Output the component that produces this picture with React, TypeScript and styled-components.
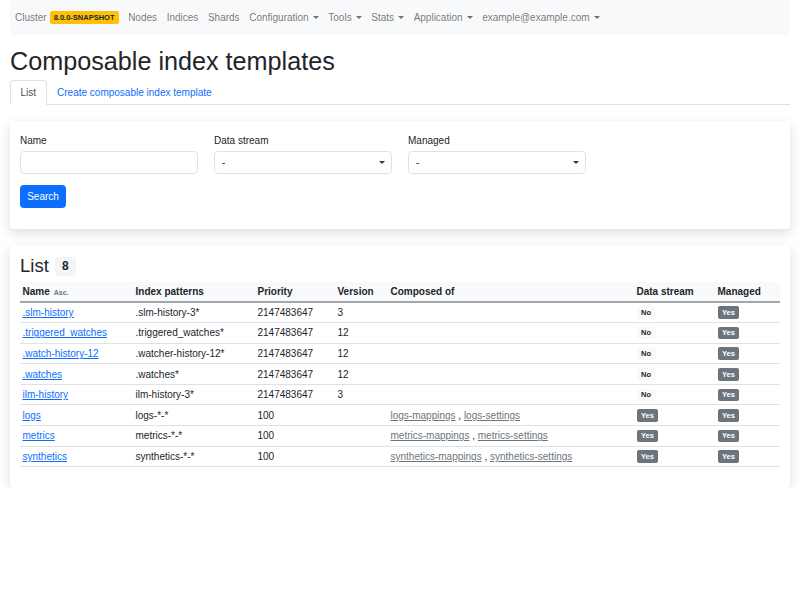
import React from "react";
import styled, { createGlobalStyle } from "styled-components";

const Global = createGlobalStyle`
  html, body { margin: 0; padding: 0; background: #fff; }
  body {
    font-family: "Liberation Sans", Arial, sans-serif;
    font-size: 10px;
    line-height: 1.5;
    color: #212529;
  }
  * { box-sizing: border-box; }
`;

const Page = styled.div`
  padding: 0 10px;
`;

const Navbar = styled.nav`
  display: flex;
  align-items: center;
  background: #f8f9fa;
  padding: 5px 0;
  height: 35px;
`;

const NavLink = styled.a`
  display: inline-flex;
  align-items: center;
  padding: 5px 4.6px 5px 5px;
  color: rgba(0, 0, 0, 0.55);
  text-decoration: none;
  white-space: nowrap;
  font-size: 10px;
`;

const Caret = styled.span`
  display: inline-block;
  margin-left: 4px;
  width: 0;
  height: 0;
  border-top: 3px solid rgba(0, 0, 0, 0.55);
  border-left: 3px solid transparent;
  border-right: 3px solid transparent;
`;

const Badge = styled.span<{ $variant: "warning" | "light" | "secondary" }>`
  display: inline-block;
  font-size: 7.5px;
  font-weight: 700;
  line-height: 1;
  padding: 2.6px 4.5px;
  border-radius: 2px;
  white-space: nowrap;
  vertical-align: 1px;
  background: ${(p) =>
    p.$variant === "warning" ? "#ffc107" : p.$variant === "light" ? "#f8f9fa" : "#6c757d"};
  color: ${(p) => (p.$variant === "secondary" ? "#fff" : "#212529")};
`;

const ClusterBadge = styled(Badge)`
  margin-left: 3px;
  padding: 2.6px 4px;
  vertical-align: 0;
`;

const Title = styled.h1`
  font-size: 25.2px;
  font-weight: 500;
  line-height: 30px;
  margin: 11px 0 4px;
`;

const Tabs = styled.div`
  display: flex;
  border-bottom: 1px solid #dee2e6;
`;

const Tab = styled.a<{ $active?: boolean }>`
  display: block;
  padding: 4px 9.5px;
  margin-bottom: -1px;
  border: 1px solid ${(p) => (p.$active ? "#dee2e6" : "transparent")};
  border-bottom-color: ${(p) => (p.$active ? "#fff" : "transparent")};
  border-radius: 4px 4px 0 0;
  background: ${(p) => (p.$active ? "#fff" : "transparent")};
  color: ${(p) => (p.$active ? "#495057" : "#0d6efd")};
  text-decoration: none;
  line-height: 15px;
`;

const Card = styled.section`
  margin-top: 16px;
  background: #fff;
  border-radius: 4px;
  box-shadow: 0 4px 12px rgba(0, 0, 0, 0.14);
  padding: 10px;
`;

const FilterRow = styled.div`
  display: grid;
  grid-template-columns: 178px 178px 178px;
  column-gap: 16px;
`;

const Field = styled.div`
  display: flex;
  flex-direction: column;
`;

const Label = styled.label`
  line-height: 15px;
  padding-top: 2px;
  margin-bottom: 3px;
`;

const Input = styled.div`
  height: 23px;
  border: 1px solid #dee2e6;
  border-radius: 4px;
  background: #fff;
`;

const Select = styled.div`
  height: 23px;
  border: 1px solid #dee2e6;
  border-radius: 4px;
  background: #fff;
  display: flex;
  align-items: center;
  justify-content: space-between;
  padding: 0 6px 0 7px;
`;

const SelectArrow = styled.span`
  width: 0;
  height: 0;
  border-top: 3.5px solid #343a40;
  border-left: 3px solid transparent;
  border-right: 3px solid transparent;
`;

const Button = styled.button`
  display: block;
  margin-top: 11px;
  margin-bottom: 11px;
  width: 46px;
  height: 23px;
  border: none;
  border-radius: 4px;
  background: #0d6efd;
  color: #fff;
  font-family: inherit;
  font-size: 10px;
  padding: 0;
`;

const ListHeading = styled.h3`
  display: flex;
  align-items: center;
  margin: 0 0 5px;
  font-size: 18.5px;
  font-weight: 500;
  line-height: 22px;
  height: 22px;
`;

const CountBadge = styled.span`
  margin-left: 6px;
  display: inline-flex;
  align-items: center;
  justify-content: center;
  width: 21px;
  height: 19px;
  background: #f4f5f6;
  border-radius: 3px;
  font-size: 12px;
  font-weight: 700;
`;

const Table = styled.table`
  width: 760px;
  table-layout: fixed;
  border-collapse: collapse;
  margin-bottom: 10px;
`;

const Th = styled.th`
  text-align: left;
  font-weight: 700;
  padding: 0 2.5px;
  height: 20px;
  line-height: 15px;
  background: #f8f9fa;
  border-bottom: 2px solid #a3a7ab;
`;

const Asc = styled.span`
  font-size: 7px;
  font-weight: 700;
  color: #6c757d;
  margin-left: 4px;
`;

const Td = styled.td`
  padding: 0 2.5px;
  height: 20.6px;
  line-height: 15px;
  border-bottom: 1px solid #dee2e6;
  white-space: nowrap;
  vertical-align: middle;
`;

const NameLink = styled.a`
  color: #0d6efd;
  text-decoration: underline;
`;

const CompLink = styled.a`
  color: #6c757d;
  text-decoration: underline;
`;

type Row = {
  name: string;
  pattern: string;
  priority: string;
  version: string;
  composed: string[];
  ds: boolean;
};

const rows: Row[] = [
  { name: ".slm-history", pattern: ".slm-history-3*", priority: "2147483647", version: "3", composed: [], ds: false },
  { name: ".triggered_watches", pattern: ".triggered_watches*", priority: "2147483647", version: "12", composed: [], ds: false },
  { name: ".watch-history-12", pattern: ".watcher-history-12*", priority: "2147483647", version: "12", composed: [], ds: false },
  { name: ".watches", pattern: ".watches*", priority: "2147483647", version: "12", composed: [], ds: false },
  { name: "ilm-history", pattern: "ilm-history-3*", priority: "2147483647", version: "3", composed: [], ds: false },
  { name: "logs", pattern: "logs-*-*", priority: "100", version: "", composed: ["logs-mappings", "logs-settings"], ds: true },
  { name: "metrics", pattern: "metrics-*-*", priority: "100", version: "", composed: ["metrics-mappings", "metrics-settings"], ds: true },
  { name: "synthetics", pattern: "synthetics-*-*", priority: "100", version: "", composed: ["synthetics-mappings", "synthetics-settings"], ds: true },
];

const colWidths = [113, 122, 80, 53, 246, 81, 65];

export default function App() {
  return (
    <Page>
      <Global />
      <Navbar>
        <NavLink>
          Cluster <ClusterBadge $variant="warning">8.0.0-SNAPSHOT</ClusterBadge>
        </NavLink>
        <NavLink>Nodes</NavLink>
        <NavLink>Indices</NavLink>
        <NavLink>Shards</NavLink>
        <NavLink>
          Configuration<Caret />
        </NavLink>
        <NavLink>
          Tools<Caret />
        </NavLink>
        <NavLink>
          Stats<Caret />
        </NavLink>
        <NavLink>
          Application<Caret />
        </NavLink>
        <NavLink>
          example@example.com<Caret />
        </NavLink>
      </Navbar>
      <Title>Composable index templates</Title>
      <Tabs>
        <Tab $active>List</Tab>
        <Tab>Create composable index template</Tab>
      </Tabs>
      <Card>
        <FilterRow>
          <Field>
            <Label>Name</Label>
            <Input />
          </Field>
          <Field>
            <Label>Data stream</Label>
            <Select>
              <span>-</span>
              <SelectArrow />
            </Select>
          </Field>
          <Field>
            <Label>Managed</Label>
            <Select>
              <span>-</span>
              <SelectArrow />
            </Select>
          </Field>
        </FilterRow>
        <Button>Search</Button>
      </Card>
      <Card>
        <ListHeading>
          List<CountBadge>8</CountBadge>
        </ListHeading>
        <Table>
          <colgroup>
            {colWidths.map((w, i) => (
              <col key={i} style={{ width: w }} />
            ))}
          </colgroup>
          <thead>
            <tr>
              <Th>
                Name<Asc>Asc.</Asc>
              </Th>
              <Th>Index patterns</Th>
              <Th>Priority</Th>
              <Th>Version</Th>
              <Th>Composed of</Th>
              <Th>Data stream</Th>
              <Th>Managed</Th>
            </tr>
          </thead>
          <tbody>
            {rows.map((r) => (
              <tr key={r.name}>
                <Td>
                  <NameLink>{r.name}</NameLink>
                </Td>
                <Td>{r.pattern}</Td>
                <Td>{r.priority}</Td>
                <Td>{r.version}</Td>
                <Td>
                  {r.composed.map((c, i) => (
                    <React.Fragment key={c}>
                      {i > 0 && " , "}
                      <CompLink>{c}</CompLink>
                    </React.Fragment>
                  ))}
                </Td>
                <Td>
                  <Badge $variant={r.ds ? "secondary" : "light"}>{r.ds ? "Yes" : "No"}</Badge>
                </Td>
                <Td>
                  <Badge $variant="secondary">Yes</Badge>
                </Td>
              </tr>
            ))}
          </tbody>
        </Table>
      </Card>
    </Page>
  );
}
